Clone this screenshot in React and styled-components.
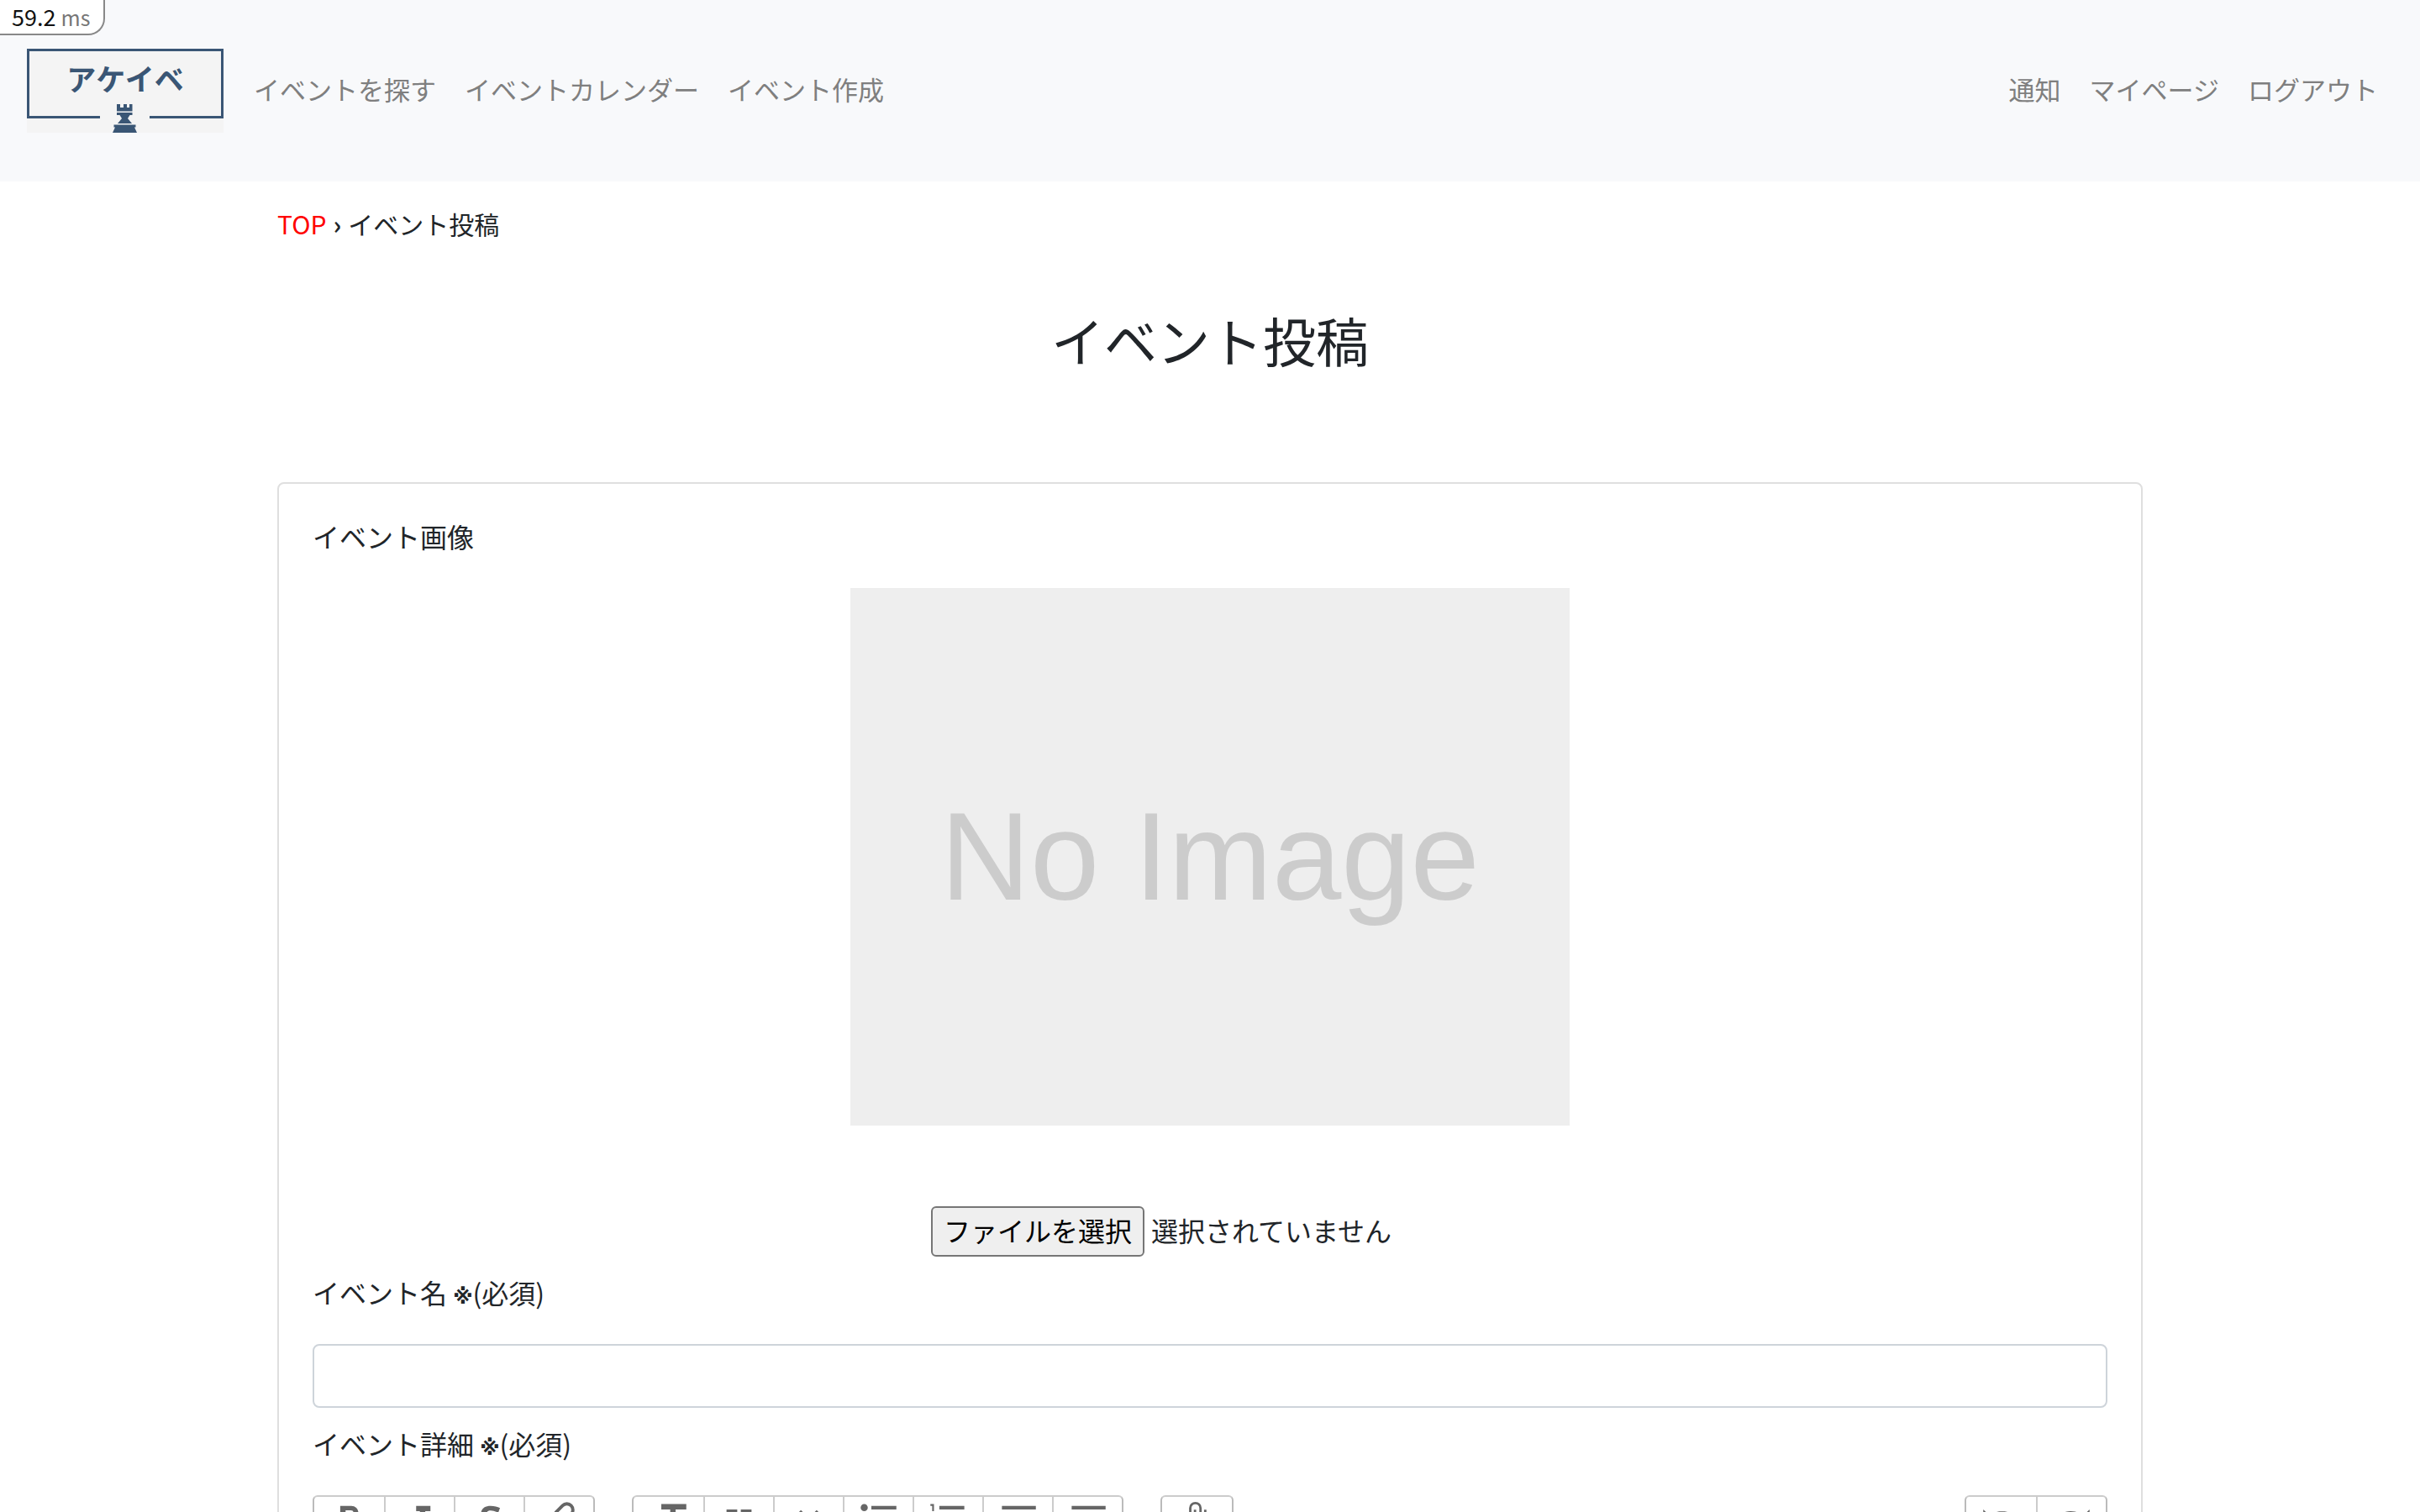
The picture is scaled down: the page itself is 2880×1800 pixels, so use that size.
import React from "react";
import styled, { createGlobalStyle, css } from "styled-components";

const GlobalStyle = createGlobalStyle`
  *, *::before, *::after { box-sizing: border-box; }
  body {
    margin: 0;
    background: #fff;
    color: #212529;
    font-family: "Noto Sans CJK JP", "Noto Sans", sans-serif;
    font-size: 32px;
    line-height: 48px;
  }
  button, input { font: inherit; }
`;

const Page = styled.div`
  height: 100vh;
  overflow-y: auto;
  scrollbar-width: none;
`;

const ProfilerBadge = styled.div`
  position: absolute;
  top: 0;
  left: 0;
  padding: 0 16px 0 14px;
  border: solid #888;
  border-width: 0 2px 2px 0;
  border-radius: 0 0 20px 0;
  background: #fff;
  color: #111;
  font-size: 27px;
  line-height: 40px;
`;

const Unit = styled.span`
  color: #777;
  font-size: 25px;
`;

const Header = styled.header`
  display: flex;
  align-items: center;
  justify-content: space-between;
  padding: 58px 50px 58px 32px;
  background: #f8f9fb;
`;

const HeaderSide = styled.div`
  display: flex;
  align-items: center;
  gap: 36px;
`;

const Nav = styled.nav`
  display: flex;
  gap: 34px;
  padding-bottom: 4px;
`;

const NavLink = styled.a`
  color: #7f7f7f;
  font-size: 31px;
  text-decoration: none;
  white-space: nowrap;
`;

const BrandLink = styled.a`
  display: block;
  height: 100px;
`;

const Container = styled.main`
  width: 100%;
  max-width: 2220px;
  margin: 0 auto;
  padding-top: 28px;
`;

const Breadcrumb = styled.nav`
  display: flex;
  gap: 8px;
  font-size: 30px;
  line-height: 45px;
`;

const TopLink = styled.a`
  color: #f00;
  text-decoration: none;
`;

const Separator = styled.span`
  font-weight: 700;
`;

const Title = styled.h1`
  margin: 76px 0 132px;
  font-size: 63px;
  font-weight: 400;
  line-height: 77px;
  text-align: center;
`;

const Card = styled.form`
  padding: 38px 40px 40px;
  border: 2px solid #dfdfdf;
  border-radius: 8px;
`;

const FieldLabel = styled.label`
  display: block;
  margin-bottom: 38px;
`;

const Mark = styled.span`
  font-family: "DejaVu Sans", sans-serif;
  font-size: 24px;
  font-weight: 700;
  line-height: 1;
`;

const ImagePreview = styled.div`
  display: flex;
  align-items: center;
  justify-content: center;
  max-width: 856px;
  height: 640px;
  margin: 0 auto 96px;
  background: #eee;
  color: #ccc;
  font-family: "Liberation Sans", Arial, sans-serif;
  font-size: 148px;
  line-height: 1;
`;

const FileRow = styled.div`
  display: flex;
  align-items: center;
  gap: 8px;
  max-width: 664px;
  margin: 0 auto 18px;
`;

const HiddenFileInput = styled.input`
  position: absolute;
  width: 1px;
  height: 1px;
  opacity: 0;
`;

const FileButton = styled.button`
  padding: 2px 13px 6px;
  border: 2px solid #767676;
  border-radius: 6px;
  background: #efefef;
  color: #000;
`;

const FileStatus = styled.span`
  padding-bottom: 4px;
`;

const TextInput = styled.input`
  display: block;
  width: 100%;
  height: 76px;
  margin-bottom: 18px;
  padding: 12px 24px;
  border: 2px solid #ced4da;
  border-radius: 8px;
  background: #fff;
`;

const Toolbar = styled.div`
  display: flex;
  gap: 44px;
  margin-bottom: 20px;
`;

const ButtonGroup = styled.div`
  display: flex;
  border: 2px solid #bbb;
  border-top-color: #ccc;
  border-radius: 6px;
  ${(p) => p.$end && css`margin-left: auto;`}
`;

const ToolButton = styled.button`
  display: flex;
  justify-content: center;
  width: 83px;
  height: 51px;
  padding: ${(p) => (p.$inset ? "4px 0 2px" : "0")};
  border: 0;
  background: transparent;
  color: #666;

  & + & { border-left: 2px solid #ccc; }
  svg { height: 100%; fill: currentColor; }
`;

const Editor = styled.textarea`
  display: block;
  width: 100%;
  height: 320px;
  border: 2px solid #bbb;
  border-radius: 6px;
`;

const TOOL_GROUPS = [
  [
    ["太字", "M15.6 11.8c1-.7 1.6-1.8 1.6-2.8a4 4 0 0 0-4-4H7v14h7c2.1 0 3.7-1.7 3.7-3.8 0-1.5-.8-2.8-2.1-3.4zM10 7.5h3a1.5 1.5 0 1 1 0 3h-3v-3zm3.5 9H10v-3h3.5a1.5 1.5 0 1 1 0 3z"],
    ["斜体", "M10 5v3h2.2l-3.4 8H6v3h8v-3h-2.2l3.4-8H18V5h-8z"],
    ["取り消し線", "M7.3 9.2C7.3 6.4 9.6 5 12.7 5c2 0 3.9.5 5.2 1.2l-1 2.7c-1.4-.8-2.8-1.2-4.2-1.2s-2.2.5-2.2 1.3.7 1.2 2 1.6H8.1c-.5-.4-.8-.8-.8-1.4zM3 12h18v2h-4.2c.4.5.5 1 .5 1.6 0 2.3-2 3.6-5 3.6-2.2 0-4.3-.6-5.7-1.7l1.2-2.5c1.5.9 3 1.4 4.5 1.4 1.3 0 2-.4 2-1.1 0-.6-.5-1-1.5-1.3H3z"],
    ["リンク", "M9.88 13.7a4.3 4.3 0 0 1 0-6.07l3.37-3.37a4.26 4.26 0 0 1 6.07 0 4.3 4.3 0 0 1 0 6.06l-1.96 1.72a.91.91 0 1 1-1.3-1.3l1.97-1.71a2.46 2.46 0 0 0-3.48-3.48l-3.38 3.37a2.46 2.46 0 0 0 0 3.48.91.91 0 1 1-1.3 1.3zM4.25 19.46a4.3 4.3 0 0 1 0-6.07l1.93-1.9a.91.91 0 1 1 1.3 1.3l-1.93 1.9a2.46 2.46 0 0 0 3.48 3.48l3.37-3.38c.96-.96.96-2.52 0-3.48a.91.91 0 1 1 1.3-1.3 4.3 4.3 0 0 1 0 6.07l-3.38 3.38a4.26 4.26 0 0 1-6.07 0z"],
  ],
  [
    ["見出し", "M12 9v3H9v7H6v-7H3V9h9zM8 4h14v3h-6v12h-3V7H8V4z"],
    ["引用", "M6 17h3l2-4V7H5v6h3zm8 0h3l2-4V7h-6v6h3z"],
    ["コード", "M18.2 12L15 15.2l1.4 1.4L21 12l-4.6-4.6L15 8.8l3.2 3.2zM5.8 12L9 8.8 7.6 7.4 3 12l4.6 4.6L9 15.2 5.8 12z"],
    ["箇条書き", "M4 4a2 2 0 1 0 0 4 2 2 0 0 0 0-4zm0 6a2 2 0 1 0 0 4 2 2 0 0 0 0-4zm0 6a2 2 0 1 0 0 4 2 2 0 0 0 0-4zM8 5v2h14V5H8zm0 6v2h14v-2H8zm0 6v2h14v-2H8z"],
    ["番号付きリスト", "M2 17h2v.5H3v1h1v.5H2v1h3v-4H2v1zm1-9h1V4H2v1h1v3zm-1 3h1.8L2 13.1v.9h3v-1H3.2L5 10.9V10H2v1zm5-6v2h14V5H7zm0 14h14v-2H7v2zm0-6h14v-2H7v2z"],
    ["インデント解除", "M3 19h19v-2H3v2zm7-6h12v-2H10v2zm-8.3-.3l2.8 2.9L6 14.2 4 12l2-2-1.4-1.5L1 12l.7.7zM3 5v2h19V5H3z"],
    ["インデント", "M3 19h19v-2H3v2zm7-6h12v-2H10v2zm-6.9-1L1 14.2l1.4 1.4L6 12l-.7-.7-2.8-2.8L1 9.9 3.1 12zM3 5v2h19V5H3z"],
  ],
  [
    ["添付", "M16.5 6v11.5a4 4 0 1 1-8 0V5a2.5 2.5 0 0 1 5 0v10.5a1 1 0 1 1-2 0V6H10v9.5a2.5 2.5 0 0 0 5 0V5a4 4 0 1 0-8 0v12.5a5.5 5.5 0 0 0 11 0V6h-1.5z", true],
  ],
  [
    ["元に戻す", "M12.5 8c-2.6 0-5 1-6.9 2.6L2 7v9h9l-3.6-3.6A8 8 0 0 1 20 16l2.4-.8a10.5 10.5 0 0 0-10-7.2z"],
    ["やり直す", "M18.4 10.6a10.5 10.5 0 0 0-16.9 4.6L4 16a8 8 0 0 1 12.7-3.6L13 16h9V7l-3.6 3.6z"],
  ],
];

function Logo() {
  return (
    <svg width="234" height="100" viewBox="0 0 234 100" role="img" aria-label="アケイベ">
      <rect width="234" height="100" fill="#f4f4f4" />
      <path d="M87 81.500H1.500V1.500H232.500V81.500H146" fill="none" stroke="#3a5675" strokeWidth="3" />
      <text x="117" y="50" textAnchor="middle" fontSize="35" fontWeight="700" fill="#3a5675">
        アケイベ
      </text>
      <path
        d="M107 66h4v4h4v-4h4v4h3v-4h3.500v8.500H107zM107 76h18.500v3h-3l-2.500 4 5 6h-17l5-6-2.500-4H107zM103.500 90.500h26v3h-1.500l3 6.500h-29l3-6.500h-1.500z"
        fill="#3a5675"
      />
    </svg>
  );
}

function RequiredLabel({ htmlFor, children }) {
  return (
    <FieldLabel htmlFor={htmlFor}>
      {children} <Mark>※</Mark>(必須)
    </FieldLabel>
  );
}

export default function App() {
  const fileRef = React.useRef(null);
  return (
    <Page>
      <GlobalStyle />
      <ProfilerBadge>
        59.2 <Unit>ms</Unit>
      </ProfilerBadge>
      <Header>
        <HeaderSide>
          <BrandLink href="#">
            <Logo />
          </BrandLink>
          <Nav>
            <NavLink href="#">イベントを探す</NavLink>
            <NavLink href="#">イベントカレンダー</NavLink>
            <NavLink href="#">イベント作成</NavLink>
          </Nav>
        </HeaderSide>
        <Nav>
          <NavLink href="#">通知</NavLink>
          <NavLink href="#">マイページ</NavLink>
          <NavLink href="#">ログアウト</NavLink>
        </Nav>
      </Header>
      <Container>
        <Breadcrumb>
          <TopLink href="#">TOP</TopLink>
          <Separator>›</Separator>
          <span>イベント投稿</span>
        </Breadcrumb>
        <Title>イベント投稿</Title>
        <Card>
          <FieldLabel htmlFor="event-image">イベント画像</FieldLabel>
          <ImagePreview>No Image</ImagePreview>
          <FileRow>
            <HiddenFileInput ref={fileRef} id="event-image" type="file" tabIndex={-1} />
            <FileButton type="button" onClick={() => fileRef.current.click()}>
              ファイルを選択
            </FileButton>
            <FileStatus>選択されていません</FileStatus>
          </FileRow>
          <RequiredLabel htmlFor="event-name">イベント名</RequiredLabel>
          <TextInput id="event-name" type="text" />
          <RequiredLabel htmlFor="event-detail">イベント詳細</RequiredLabel>
          <Toolbar>
            {TOOL_GROUPS.map((group, i) => (
              <ButtonGroup key={i} $end={i === TOOL_GROUPS.length - 1}>
                {group.map(([name, path, inset]) => (
                  <ToolButton key={name} type="button" aria-label={name} $inset={inset}>
                    <svg viewBox="0 0 24 24" aria-hidden="true">
                      <path d={path} />
                    </svg>
                  </ToolButton>
                ))}
              </ButtonGroup>
            ))}
          </Toolbar>
          <Editor id="event-detail" />
        </Card>
      </Container>
    </Page>
  );
}
